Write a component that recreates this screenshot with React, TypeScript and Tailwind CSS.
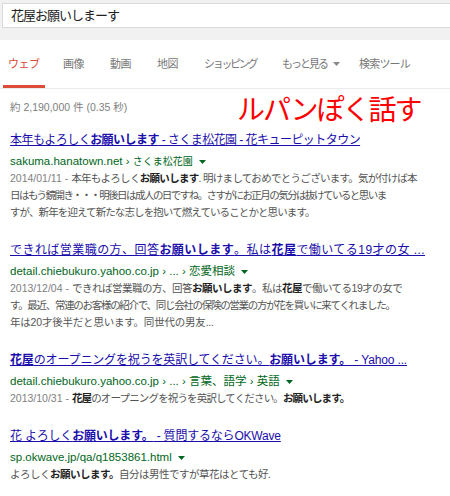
import React from 'react';

const FONT = '"Liberation Sans", "Noto Sans CJK JP", sans-serif';

function Caret({ color }: { color: string }) {
  return (
    <svg width="7" height="4" viewBox="0 0 7 4" className="inline-block ml-[6px] align-middle">
      <path d="M0 0 L7 0 L3.5 4 Z" fill={color} />
    </svg>
  );
}

type Part = string | { b: string };

function Parts({ parts, boldClass }: { parts: Part[]; boldClass: string }) {
  return (
    <>
      {parts.map((p, i) =>
        typeof p === 'string' ? (
          <span key={i}>{p}</span>
        ) : (
          <b key={i} className={boldClass}>
            {p.b}
          </b>
        )
      )}
    </>
  );
}

interface Result {
  title: Part[];
  titleTrack: string;
  url: React.ReactNode;
  date?: string;
  lines: { parts: Part[]; track: string }[];
}

const results: Result[] = [
  {
    title: ['本年もよろしく', { b: 'お願いします' }, ' - さくま松花園 - 花キューピットタウン'],
    titleTrack: 'tracking-[-0.55px]',
    url: (
      <>
        sakuma.hanatown.net › <span className="text-[10px]">さくま松花園</span>
      </>
    ),
    date: '2014/01/11',
    lines: [
      { parts: ['本年もよろしく', { b: 'お願いします' }, '. 明けましておめでとうございます。気が付けば本'], track: 'tracking-[-0.7px]' },
      { parts: ['日はもう鏡開き・・・明後日は成人の日ですね。さすがにお正月の気分は抜けていると思いま'], track: 'tracking-[-1.55px]' },
      { parts: ['すが、新年を迎えて新たな志しを抱いて燃えていることかと思います。'], track: 'tracking-[-0.9px]' },
    ],
  },
  {
    title: ['できれば営業職の方、回答', { b: 'お願いします' }, '。私は', { b: '花屋' }, 'で働いてる19才の女 ...'],
    titleTrack: 'tracking-[0.45px]',
    url: <>detail.chiebukuro.yahoo.co.jp › ... › 恋愛相談</>,
    date: '2013/12/04',
    lines: [
      { parts: ['できれば営業職の方、回答', { b: 'お願いします' }, '。私は', { b: '花屋' }, 'で働いてる19才の女で'], track: 'tracking-[-0.5px]' },
      { parts: ['す。最近、常連のお客様の紹介で、同じ会社の保険の営業の方が花を買いに来てくれました。'], track: 'tracking-[-1.3px]' },
      { parts: ['年は20才後半だと思います。同世代の男友...'], track: 'tracking-[-0.2px]' },
    ],
  },
  {
    title: [{ b: '花屋' }, 'のオープニングを祝うを英訳してください。', { b: 'お願いします。' }, ' - Yahoo ...'],
    titleTrack: 'tracking-[-0.15px]',
    url: <>detail.chiebukuro.yahoo.co.jp › ... › 言葉、語学 › 英語</>,
    date: '2013/10/31',
    lines: [{ parts: [{ b: '花屋' }, 'のオープニングを祝うを英訳してください。', { b: 'お願いします。' }], track: 'tracking-[-0.85px]' }],
  },
  {
    title: ['花 よろしく', { b: 'お願いします。' }, ' - 質問するならOKWave'],
    titleTrack: 'tracking-[-0.2px]',
    url: <>sp.okwave.jp/qa/q1853861.html</>,
    lines: [{ parts: ['よろしく', { b: 'お願いします。' }, '自分は男性ですが草花はとても好.'], track: 'tracking-[-0.5px]' }],
  },
];

const tabs = [
  { label: 'ウェブ', w: 'w-[60px]', track: 'tracking-[-0.5px]' },
  { label: '画像', w: 'w-[47px]', track: 'tracking-[-0.5px]' },
  { label: '動画', w: 'w-[47px]', track: 'tracking-[-0.5px]' },
  { label: '地図', w: 'w-[47px]', track: 'tracking-[-0.5px]' },
  { label: 'ショッピング', w: 'w-[78px]', track: 'tracking-[-2.3px]' },
  { label: 'もっと見る', w: 'w-[77px]', track: 'tracking-[-2px]', caret: true },
  { label: '検索ツール', w: 'w-[80px]', track: 'tracking-[-0.8px]' },
];

export default function App() {
  return (
    <div className="w-[450px] h-[496px] overflow-hidden bg-white" style={{ fontFamily: FONT }}>
      <div className="h-[40px] bg-[#f1f1f1] pt-[3px] pl-[2px]">
        <div className="h-[25px] bg-white border border-r-0 border-[#d9d9d9] flex items-center pl-[8px] text-[13px] tracking-[-1px] text-[#222]">
          花屋お願いしまーす
        </div>
      </div>

      <nav className="h-[49px] flex pl-[3px] border-b border-[#ebebeb] text-[11px] text-[#777]">
        {tabs.map((t, i) =>
          i === 0 ? (
            <div key={t.label} className={`${t.w} h-full ${t.track}`}>
              <div className="w-[42px] h-[48px] pl-[5px] pt-[3px] flex items-center border-b-[3px] border-[#dd4b39] text-[#dd4b39]">
                {t.label}
              </div>
            </div>
          ) : (
            <div key={t.label} className={`${t.w} h-[48px] flex items-center shrink-0`}>
              <span className={t.track}>{t.label}</span>
              {t.caret && <Caret color="#888" />}
            </div>
          )
        )}
      </nav>

      <div className="pl-[10px]">
        <div className="h-[41px] flex items-center">
          <span className="w-[227px] text-[10.5px] text-[#808080] mb-[3px]">約 2,190,000 件 (0.35 秒)</span>
          <span className="text-[28px] leading-[30px] tracking-[-2px] text-[#ff0000] mt-[2px]">ルパンぽく話す</span>
        </div>

        <div className="flex flex-col gap-[19px]">
          {results.map((r, i) => (
            <div key={i}>
              <div className={`h-[20px] leading-[20px] text-[12px] ${r.titleTrack} text-[#1a0dab] underline whitespace-nowrap`}>
                <Parts parts={r.title} boldClass="font-bold" />
              </div>
              <div className="mt-[2px] h-[18px] leading-[18px] text-[11.5px] text-[#006621] whitespace-nowrap">
                {r.url}
                <Caret color="#006621" />
              </div>
              <div className="text-[10.5px] leading-[17px] text-[#545454]">
                {r.lines.map((line, j) => (
                  <div key={j} className={`whitespace-nowrap ${line.track}`}>
                    {j === 0 && r.date && <span className="text-[#808080] tracking-normal">{r.date} - </span>}
                    <Parts parts={line.parts} boldClass="font-bold text-[#222]" />
                  </div>
                ))}
              </div>
            </div>
          ))}
        </div>
      </div>
    </div>
  );
}
